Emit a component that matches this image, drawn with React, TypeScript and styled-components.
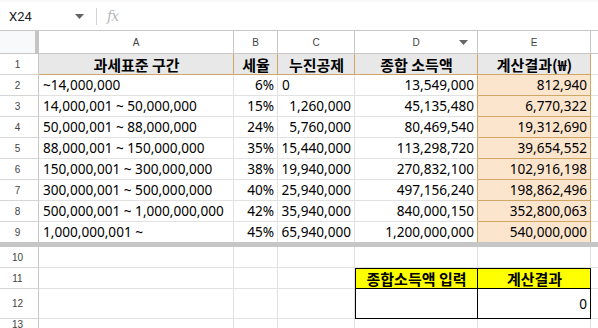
import React from "react";
import styled, { createGlobalStyle } from "styled-components";

const Global = createGlobalStyle`
  html, body { margin: 0; padding: 0; background: #fff; }
  body { font-family: "Noto Sans", "Noto Sans CJK KR", sans-serif; color: #000; }
  * { box-sizing: border-box; }
`;

const GRID = "#e2e2e2";
const HEAD_LINE = "#c7c7c7";
const TAN = "#d0a766";
const PEACH = "#fce5cd";
const HEAD_BG = "#e8e8e8";

const Page = styled.div`
  width: 598px;
  height: 328px;
  overflow: hidden;
  display: flex;
  flex-direction: column;
`;

const FormulaBar = styled.div`
  flex: none;
  height: 31px;
  border-top: 2px solid #f8f9fa;
  border-bottom: 1px solid ${HEAD_LINE};
  display: flex;
  align-items: center;
`;

const NameBox = styled.div`
  width: 88px;
  padding-left: 9px;
  padding-right: 4px;
  display: flex;
  align-items: center;
  justify-content: space-between;
  font-family: Roboto, "Liberation Sans", sans-serif;
  font-size: 13px;
  color: #202124;
`;

const Divider = styled.div`
  width: 1px;
  height: 17px;
  margin-left: 8px;
  background: #d3d3d3;
`;

const Fx = styled.div`
  margin-left: 10px;
  font-family: "DejaVu Serif", "Liberation Serif", serif;
  font-style: italic;
  font-size: 14px;
  color: #b4b7bb;
  letter-spacing: -1px;
`;

const Sheet = styled.div`
  flex: 1;
  display: grid;
  grid-template-columns: 39px 195px 44px 77px 123px 113px 1fr;
  grid-template-rows: 23px repeat(8, 21px) 20px 5px 21px 21px 30px 1fr;
`;

const Corner = styled.div`
  background: #f8f9fa;
  border-right: 4px solid #c4c4c4;
  border-bottom: 1px solid ${HEAD_LINE};
`;

const ColHead = styled.div`
  display: grid;
  grid-template-columns: 1fr auto 1fr;
  align-items: center;
  background: #fff;
  border-right: 1px solid ${HEAD_LINE};
  border-bottom: 1px solid ${HEAD_LINE};
  font-family: "Liberation Sans", Arial, sans-serif;
  font-size: 10px;
  color: #444;
`;

const ColLetter = styled.span`
  grid-column: 2;
`;

const ColCaret = styled.span`
  grid-column: 3;
  justify-self: end;
  margin-right: 9px;
  display: flex;
`;

const RowHead = styled.div<{ $last?: boolean }>`
  display: flex;
  align-items: center;
  justify-content: center;
  padding-right: 3px;
  background: #fff;
  border-right: 1px solid ${HEAD_LINE};
  border-bottom: ${(p) => (p.$last ? "none" : `1px solid #d6d6d6`)};
  font-family: "Liberation Sans", Arial, sans-serif;
  font-size: 10px;
  color: #444;
`;

type Align = "left" | "right" | "center";

const Cell = styled.div<{
  $align?: Align;
  $bg?: string;
  $bold?: boolean;
  $right?: string;
  $bottom?: string | null;
  $inset?: string;
}>`
  display: flex;
  align-items: center;
  justify-content: ${(p) =>
    p.$align === "right" ? "flex-end" : p.$align === "center" ? "center" : "flex-start"};
  padding: 0 3px 0 4px;
  white-space: pre;
  overflow: hidden;
  background: ${(p) => p.$bg || "#fff"};
  border-right: 1px solid ${(p) => p.$right || GRID};
  border-bottom: ${(p) => (p.$bottom === null ? "none" : `1px solid ${p.$bottom || GRID}`)};
  box-shadow: ${(p) => p.$inset || "none"};
  font-family: ${(p) =>
    p.$bold ? `"Noto Sans CJK KR", "Noto Sans", sans-serif` : `"Noto Sans", "Noto Sans CJK KR", sans-serif`};
  font-weight: ${(p) => (p.$bold ? 700 : 400)};
  font-size: ${(p) => (p.$bold ? "15px" : "13.6px")};
  line-height: 1;
`;

const FreezeBar = styled.div`
  grid-column: 1 / -1;
  background: #c6c6c6;
`;

const headers = ["과세표준 구간", "세율", "누진공제", "종합 소득액", "계산결과(₩)"];

const rows: string[][] = [
  ["~14,000,000", "6%", "0", "13,549,000", "812,940"],
  ["14,000,001 ~ 50,000,000", "15%", "1,260,000", "45,135,480", "6,770,322"],
  ["50,000,001 ~ 88,000,000", "24%", "5,760,000", "80,469,540", "19,312,690"],
  ["88,000,001 ~ 150,000,000", "35%", "15,440,000", "113,298,720", "39,654,552"],
  ["150,000,001 ~ 300,000,000", "38%", "19,940,000", "270,832,100", "102,916,198"],
  ["300,000,001 ~ 500,000,000", "40%", "25,940,000", "497,156,240", "198,862,496"],
  ["500,000,001 ~ 1,000,000,000", "42%", "35,940,000", "840,000,150", "352,800,063"],
  ["1,000,000,001 ~", "45%", "65,940,000", "1,200,000,000", "540,000,000"],
];

const Caret = ({ color = "#5f6368" }: { color?: string }) => (
  <svg width="9" height="5" viewBox="0 0 9 5">
    <path d="M0 0h9L4.5 5z" fill={color} />
  </svg>
);

const EmptyRow = ({ n }: { n: number }) => (
  <>
    <RowHead>{n}</RowHead>
    <Cell />
    <Cell />
    <Cell />
    <Cell />
    <Cell />
    <Cell />
  </>
);

export default function App() {
  return (
    <Page>
      <Global />
      <FormulaBar>
        <NameBox>
          <span>X24</span>
          <Caret />
        </NameBox>
        <Divider />
        <Fx>fx</Fx>
      </FormulaBar>
      <Sheet>
        <Corner />
        {["A", "B", "C", "D", "E"].map((l) => (
          <ColHead key={l}>
            <ColLetter>{l}</ColLetter>
            {l === "D" && (
              <ColCaret>
                <Caret color="#666" />
              </ColCaret>
            )}
          </ColHead>
        ))}
        <ColHead />

        <RowHead>1</RowHead>
        {headers.map((h) => (
          <Cell key={h} $align="center" $bold $bg={HEAD_BG} $right={TAN} $bottom={TAN}>
            {h}
          </Cell>
        ))}
        <Cell />

        {rows.map((r, i) => {
          const last = i === rows.length - 1;
          const bottom = last ? null : undefined;
          return (
            <React.Fragment key={i}>
              <RowHead $last={last}>{i + 2}</RowHead>
              <Cell $bottom={bottom}>{r[0]}</Cell>
              <Cell $align="right" $bottom={bottom}>{r[1]}</Cell>
              <Cell $align={r[2] === "0" ? "left" : "right"} $bottom={bottom}>
                {r[2]}
              </Cell>
              <Cell $align="right" $right={TAN} $bottom={bottom}>
                {r[3]}
              </Cell>
              <Cell $align="right" $bg={PEACH} $right={TAN} $bottom={last ? null : TAN}>
                {r[4]}
              </Cell>
              <Cell $bottom={bottom} />
            </React.Fragment>
          );
        })}

        <FreezeBar />

        <EmptyRow n={10} />

        <RowHead>11</RowHead>
        <Cell />
        <Cell />
        <Cell />
        <Cell $align="center" $bold $bg="#ffff00" $right="#000" $bottom="#000" $inset="inset 1px 1px 0 #000">
          종합소득액 입력
        </Cell>
        <Cell $align="center" $bold $bg="#ffff00" $right="#000" $bottom="#000" $inset="inset 0 1px 0 #000">
          계산결과
        </Cell>
        <Cell />

        <RowHead>12</RowHead>
        <Cell />
        <Cell />
        <Cell />
        <Cell $right="#000" $bottom="#000" $inset="inset 1px 0 0 #000" />
        <Cell $align="right" $right="#000" $bottom="#000">
          0
        </Cell>
        <Cell />

        <EmptyRow n={13} />
      </Sheet>
    </Page>
  );
}
